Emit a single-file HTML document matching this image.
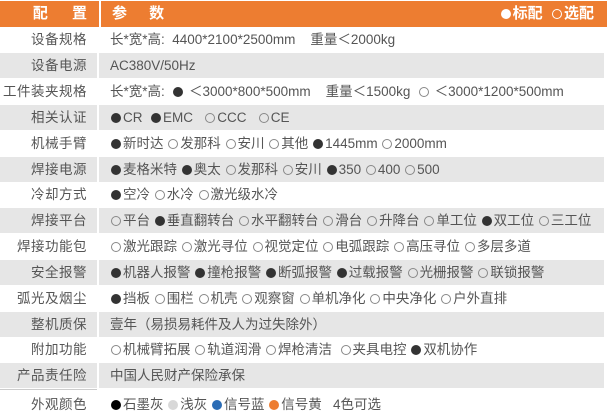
<!DOCTYPE html>
<html><head><meta charset="utf-8">
<style>
*{margin:0;padding:0;box-sizing:border-box}
body{width:607px;height:418px;background:#fff;font-family:"Liberation Sans","Noto Sans CJK SC",sans-serif;color:#555;font-size:13.5px;overflow:hidden;position:relative}
.row{position:absolute;left:0;width:607px;height:25px}
.l{position:absolute;left:0;top:0;bottom:0;width:97px;text-align:right;padding-right:10px;line-height:25px;white-space:nowrap;letter-spacing:0.5px}
.r{position:absolute;left:99px;right:3px;top:0;bottom:0;line-height:25px;padding-left:11px;white-space:nowrap}
.g .l,.g .r{background:#e6e6e6}
.h{background:#ED7D31;color:#fff;font-size:15px;font-weight:bold;height:26px;top:1px}
.h .l,.h .r{line-height:26px;background:#ED7D31}
.h .r{right:0}
.f,.o{display:inline-block;width:10px;height:10px;border-radius:50%;vertical-align:-1px;margin:0 2px 0 1px}
.f{background:#333}
.o{border:1px solid #888}
</style></head><body>
<div class="row h"><div class="l" style="letter-spacing:10px;padding-right:0">配 置</div><div class="r" style="letter-spacing:9px;border-left:2px solid #fff">参 数<span style="position:absolute;right:13px;letter-spacing:0;font-weight:bold"><span class="f" style="background:#fff"></span>标配 &nbsp;<span class="o" style="border-color:#fff"></span>选配</span></div></div>
<div class="row" style="top:27px"><div class="l">设备规格</div><div class="r">长*宽*高: &nbsp;4400*2100*2500mm &nbsp; &nbsp;重量＜2000kg</div></div>
<div class="row g" style="top:53px"><div class="l">设备电源</div><div class="r">AC380V/50Hz</div></div>
<div class="row" style="top:79px"><div class="l">工件装夹规格</div><div class="r">长*宽*高: &nbsp;<span class="f"></span> ＜3000*800*500mm &nbsp; &nbsp;重量＜1500kg &nbsp;<span class="o"></span> ＜3000*1200*500mm</div></div>
<div class="row g" style="top:105px"><div class="l">相关认证</div><div class="r"><span class="f"></span>CR &nbsp;<span class="f"></span>EMC &nbsp; <span class="o"></span>CCC &nbsp; <span class="o"></span>CE</div></div>
<div class="row" style="top:131px"><div class="l">机械手臂</div><div class="r"><span class="f"></span>新时达 <span class="o"></span>发那科 <span class="o"></span>安川 <span class="o"></span>其他 <span class="f"></span>1445mm <span class="o"></span>2000mm</div></div>
<div class="row g" style="top:157px"><div class="l">焊接电源</div><div class="r"><span class="f"></span>麦格米特 <span class="f"></span>奥太 <span class="o"></span>发那科 <span class="o"></span>安川 <span class="f"></span>350 <span class="o"></span>400 <span class="o"></span>500</div></div>
<div class="row" style="top:182px"><div class="l">冷却方式</div><div class="r"><span class="f"></span>空冷 <span class="o"></span>水冷 <span class="o"></span>激光级水冷</div></div>
<div class="row g" style="top:208px"><div class="l">焊接平台</div><div class="r"><span class="o"></span>平台 <span class="f"></span>垂直翻转台 <span class="o"></span>水平翻转台 <span class="o"></span>滑台 <span class="o"></span>升降台 <span class="o"></span>单工位 <span class="f"></span>双工位 <span class="o"></span>三工位</div></div>
<div class="row" style="top:234px"><div class="l">焊接功能包</div><div class="r"><span class="o"></span>激光跟踪 <span class="o"></span>激光寻位 <span class="o"></span>视觉定位 <span class="o"></span>电弧跟踪 <span class="o"></span>高压寻位 <span class="o"></span>多层多道</div></div>
<div class="row g" style="top:260px"><div class="l">安全报警</div><div class="r"><span class="f"></span>机器人报警 <span class="f"></span>撞枪报警 <span class="f"></span>断弧报警 <span class="f"></span>过载报警 <span class="o"></span>光栅报警 <span class="o"></span>联锁报警</div></div>
<div class="row" style="top:286px"><div class="l">弧光及烟尘</div><div class="r"><span class="f"></span>挡板 <span class="o"></span>围栏 <span class="o"></span>机壳 <span class="o"></span>观察窗 <span class="o"></span>单机净化 <span class="o"></span>中央净化 <span class="o"></span>户外直排</div></div>
<div class="row g" style="top:312px"><div class="l">整机质保</div><div class="r">壹年（易损易耗件及人为过失除外）</div></div>
<div class="row" style="top:337px"><div class="l">附加功能</div><div class="r"><span class="o"></span>机械臂拓展 <span class="o"></span>轨道润滑 <span class="o"></span>焊枪清洁 &nbsp;<span class="o"></span>夹具电控 <span class="f"></span>双机协作</div></div>
<div class="row g" style="top:363px"><div class="l">产品责任险</div><div class="r">中国人民财产保险承保</div></div>
<div style="position:absolute;top:389px;left:0;width:97px;height:1px;background:#ccc"></div>
<div class="row" style="top:391px;height:27px"><div class="l" style="line-height:27px">外观颜色</div><div class="r" style="line-height:27px"><span class="f" style="background:#000"></span>石墨灰 <span class="f" style="background:#d8d8d8"></span>浅灰 <span class="f" style="background:#2b6cb5"></span>信号蓝 <span class="f" style="background:#ED7D31"></span>信号黄 &nbsp; 4色可选</div></div>
</body></html>
